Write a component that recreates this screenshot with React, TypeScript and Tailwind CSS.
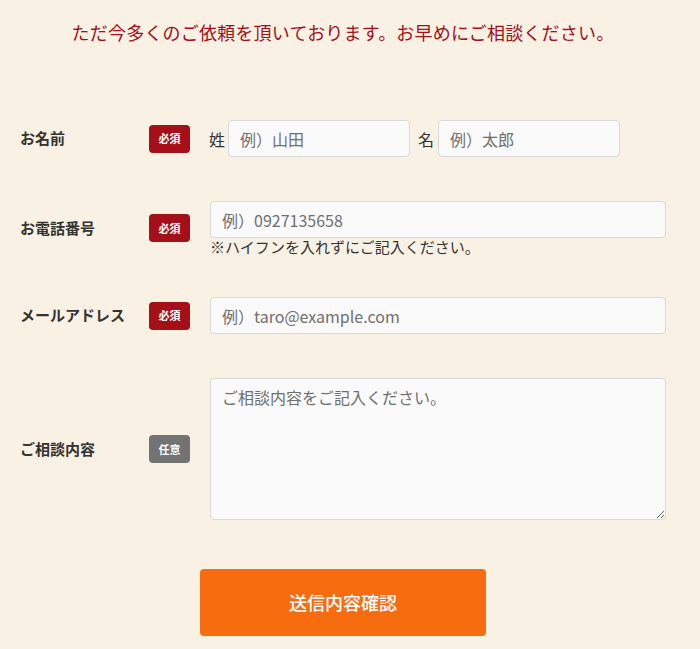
import React from "react";

const FONT = { fontFamily: '"Noto Sans CJK JP", "Noto Sans", sans-serif' };

function Badge({ required = true }: { required?: boolean }) {
  return (
    <span
      className={`flex h-[28px] w-[41px] shrink-0 items-center justify-center rounded-[4px] text-[11px] font-bold text-white ${
        required ? "bg-[#a50f18]" : "bg-[#737373]"
      }`}
    >
      {required ? "必須" : "任意"}
    </span>
  );
}

const inputCls =
  "h-[37px] rounded-[4px] border border-[#d9d9d9] bg-[#fafafa] px-[11px] text-[16px] text-[#333] placeholder:text-[#6f6f6f] outline-none";

function Row({ label, required = true, children }: { label: string; required?: boolean; children: React.ReactNode }) {
  return (
    <div className="flex items-center">
      <div className="w-[129px] shrink-0 text-[15px] font-bold text-[#333]">{label}</div>
      <Badge required={required} />
      <div className="ml-[20px] flex-1">{children}</div>
    </div>
  );
}

export default function App() {
  return (
    <div className="min-h-[649px] w-full bg-[#f8f1e4] pl-[20px] pr-[34px]" style={FONT}>
      <p className="pt-[19px] text-center text-[18px] leading-[27px] tracking-[0.2px] text-[#a50f18]">
        ただ今多くのご依頼を頂いております。お早めにご相談ください。
      </p>

      <form className="mt-[74px] flex flex-col" onSubmit={(e) => e.preventDefault()}>
        <Row label="お名前">
          <div className="-ml-[1px] flex items-center">
            <span className="mr-[3px] text-[16px] text-[#333]">姓</span>
            <input className={`${inputCls} w-[182px]`} placeholder="例）山田" />
            <span className="ml-[8px] mr-[4px] text-[16px] text-[#333]">名</span>
            <input className={`${inputCls} w-[182px]`} placeholder="例）太郎" />
          </div>
        </Row>

        <div className="mt-[44px]">
          <Row label="お電話番号">
            <input className={`${inputCls} w-full`} placeholder="例）0927135658" />
            <p className="text-[15px] leading-[17px] text-[#333]">※ハイフンを入れずにご記入ください。</p>
          </Row>
        </div>

        <div className="mt-[42px]">
          <Row label="メールアドレス">
            <input className={`${inputCls} w-full`} placeholder="例）taro@example.com" />
          </Row>
        </div>

        <div className="mt-[44px]">
          <Row label="ご相談内容" required={false}>
            <textarea
              className="block h-[142px] w-full rounded-[4px] border border-[#d9d9d9] bg-[#fafafa] px-[11px] py-[6px] text-[16px] text-[#333] placeholder:text-[#6f6f6f] outline-none"
              placeholder="ご相談内容をご記入ください。"
            />
          </Row>
        </div>

        <div className="mt-[49px] flex">
          <button
            type="submit"
            className="ml-[180px] h-[67px] w-[286px] rounded-[4px] bg-[#f76c0f] text-[18px] font-medium text-white"
          >
            送信内容確認
          </button>
        </div>
      </form>
    </div>
  );
}
